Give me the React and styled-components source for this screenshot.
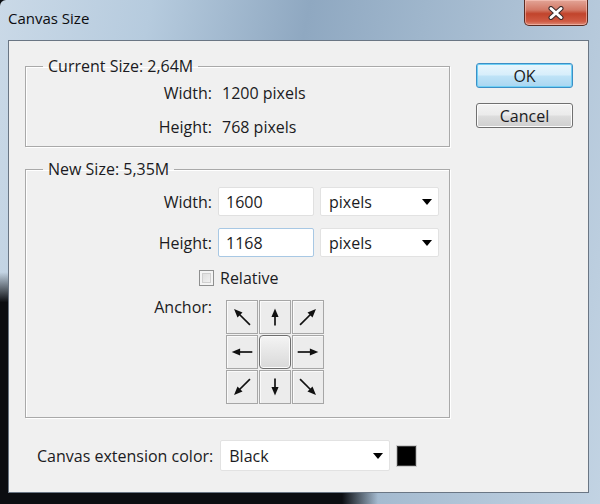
import React from "react";
import styled, { createGlobalStyle } from "styled-components";

const GlobalStyle = createGlobalStyle`
  html, body { margin: 0; padding: 0; background: #0b0d11; }
  body { font-family: "Open Sans", "Noto Sans", sans-serif; color: #1b1b22; }
  * { box-sizing: border-box; }
`;

function Arrow({ angle, len = 20 }) {
  const half = len / 2;
  return (
    <svg width="32" height="32" viewBox="0 0 32 32">
      <g transform={`rotate(${angle} 16 16)`}>
        <line x1="16" y1={16 + half} x2="16" y2={16 - half + 6} stroke="#111" strokeWidth="1.8" />
        <polygon points={`16,${16 - half} 12.2,${16 - half + 9} 19.8,${16 - half + 9}`} fill="#111" />
      </g>
    </svg>
  );
}

function Caret() {
  return (
    <svg width="10" height="6" viewBox="0 0 10 6">
      <polygon points="0,0 10,0 5,6" fill="#000" />
    </svg>
  );
}

function Dropdown({ value, wide }) {
  return (
    <Select wide={wide}>
      <span>{value}</span>
      <Caret />
    </Select>
  );
}

const anchors = [-45, 0, 45, -90, null, 90, -135, 180, 135];

export default function App() {
  return (
    <Window>
      <GlobalStyle />
      <TitleBar>
        <Title>Canvas Size</Title>
        <CloseButton>
          <svg width="18" height="14" viewBox="0 0 18 14">
            <path d="M4 2.5 L14 11.5 M14 2.5 L4 11.5" stroke="#3a2a2a" strokeWidth="5" strokeLinecap="round" />
            <path d="M4 2.5 L14 11.5 M14 2.5 L4 11.5" stroke="#fff" strokeWidth="3" strokeLinecap="round" />
          </svg>
        </CloseButton>
      </TitleBar>
      <Client>
        <TopArea>
          <LeftCol>
            <Group>
              <Legend>Current Size: 2,64M</Legend>
              <InfoGrid>
                <Label>Width:</Label>
                <Value>1200 pixels</Value>
                <Label>Height:</Label>
                <Value>768 pixels</Value>
              </InfoGrid>
            </Group>
            <Group second>
              <Legend>New Size: 5,35M</Legend>
              <NewBody>
                <FieldRow>
                  <RowLabel>Width:</RowLabel>
                  <Input>1600</Input>
                  <Dropdown value="pixels" />
                </FieldRow>
                <FieldRow gap={12}>
                  <RowLabel>Height:</RowLabel>
                  <Input focused>1168</Input>
                  <Dropdown value="pixels" />
                </FieldRow>
                <CheckRow>
                  <CheckBox />
                  <span>Relative</span>
                </CheckRow>
                <AnchorRow>
                  <RowLabel>Anchor:</RowLabel>
                  <AnchorGrid>
                    {anchors.map((a, i) =>
                      a === null ? (
                        <CenterCell key={i} />
                      ) : (
                        <Cell key={i}>
                          <Arrow angle={a} len={a % 90 === 0 ? (a === 0 || a === 180 ? 18 : 22) : 24} />
                        </Cell>
                      )
                    )}
                  </AnchorGrid>
                </AnchorRow>
              </NewBody>
            </Group>
          </LeftCol>
          <RightCol>
            <Button primary>OK</Button>
            <Button>Cancel</Button>
          </RightCol>
        </TopArea>
        <BottomRow>
          <span>Canvas extension color:</span>
          <Dropdown value="Black" wide />
          <Swatch />
        </BottomRow>
      </Client>
    </Window>
  );
}

const Window = styled.div`
  width: 600px;
  height: 504px;
  display: flex;
  flex-direction: column;
  overflow: hidden;
  border-top-left-radius: 6px;
  background:
    linear-gradient(to bottom, rgba(11, 13, 17, 0) 54%, #0b0d11 60%) left top / 9px 100% no-repeat,
    linear-gradient(to right, #0b0d11 57%, rgba(11, 13, 17, 0) 63%) left bottom / 100% 11px no-repeat,
    linear-gradient(100deg, #cad9e7 0%, #b6cbde 22%, #8fa8c1 45%, #9fb6cc 62%, #c2d3e3 100%);
`;

const TitleBar = styled.div`
  height: 40px;
  display: flex;
  justify-content: space-between;
  align-items: flex-start;
  padding-left: 8px;
`;

const Title = styled.div`
  font-size: 15px;
  line-height: 22px;
  margin-top: 7px;
  color: #0c0c10;
`;

const CloseButton = styled.div`
  width: 64px;
  height: 26px;
  margin-right: 12px;
  border: 1px solid #5b2b22;
  border-top: none;
  border-radius: 0 0 5px 5px;
  background: linear-gradient(to bottom, #e3a597 0%, #d27764 40%, #c1442c 55%, #cf5a43 85%, #dc8a76 100%);
  box-shadow: inset 0 0 0 1px rgba(255, 210, 200, 0.5);
  display: flex;
  align-items: center;
  justify-content: center;
`;

const Client = styled.div`
  flex: 1;
  margin: 0 11px 11px 8px;
  background: #f0f0f0;
  border: 1px solid #6a7684;
  padding: 15px 0 0 16px;
  display: flex;
  flex-direction: column;
  font-size: 16px;
  line-height: 20px;
`;

const TopArea = styled.div`
  display: flex;
  align-items: flex-start;
`;

const LeftCol = styled.div`
  width: 425px;
  display: flex;
  flex-direction: column;
`;

const Group = styled.fieldset`
  margin: ${(p) => (p.second ? "12px" : "0")} 0 0 0;
  padding: 0;
  min-inline-size: 0;
  border: 1px solid #a9a9a9;
  box-shadow: inset 1px 1px 0 #fff, 1px 1px 0 #fff;
`;

const Legend = styled.legend`
  margin-left: 17px;
  padding: 0 5px;
  font-size: 16px;
  line-height: 20px;
`;

const InfoGrid = styled.div`
  display: grid;
  grid-template-columns: 186px auto;
  column-gap: 10px;
  row-gap: 14px;
  padding: 7px 0 9px 0;
`;

const Label = styled.div`
  text-align: right;
`;

const Value = styled.div``;

const NewBody = styled.div`
  display: flex;
  flex-direction: column;
  padding: 8px 0 13px 0;
`;

const FieldRow = styled.div`
  display: flex;
  align-items: center;
  margin-top: ${(p) => p.gap || 0}px;
`;

const RowLabel = styled.div`
  width: 186px;
  text-align: right;
  flex-shrink: 0;
`;

const Input = styled.div`
  width: 96px;
  height: 29px;
  margin-left: 6px;
  background: #fff;
  border: 1px solid ${(p) => (p.focused ? "#a8c8e4" : "#e0e0e0")};
  border-radius: 2px;
  padding-left: 7px;
  display: flex;
  align-items: center;
`;

const Select = styled.div`
  width: ${(p) => (p.wide ? 170 : 119)}px;
  height: ${(p) => (p.wide ? 31 : 29)}px;
  margin-left: ${(p) => (p.wide ? 7 : 6)}px;
  background: #fff;
  border: 1px solid #e2e2e2;
  border-radius: 2px;
  padding: 0 6px 0 8px;
  display: flex;
  align-items: center;
  justify-content: space-between;
`;

const CheckRow = styled.div`
  display: flex;
  align-items: center;
  height: 20px;
  margin-top: 11px;
  padding-left: 173px;
  gap: 6px;
`;

const CheckBox = styled.div`
  width: 15px;
  height: 16px;
  border: 1px solid #8e8f8f;
  background: linear-gradient(135deg, #d8d8d8, #f7f7f7);
  box-shadow: inset 0 0 0 2px #f4f4f4, inset 0 0 0 3px #cfcfcf;
`;

const AnchorRow = styled.div`
  display: flex;
  align-items: flex-start;
  margin-top: 9px;
`;

const AnchorGrid = styled.div`
  display: grid;
  grid-template-columns: repeat(3, 32px);
  grid-template-rows: repeat(3, 34px);
  gap: 1px;
  margin: 3px 0 0 14px;
`;

const Cell = styled.div`
  border: 1px solid #a6a6a6;
  background: #ececec;
  box-shadow: inset 1px 1px 0 #fafafa;
  display: flex;
  align-items: center;
  justify-content: center;
`;

const CenterCell = styled.div`
  border: 1px solid #6f6f6f;
  border-radius: 4px;
  background: linear-gradient(to bottom, #f4f4f4, #d9d9d9);
  box-shadow: inset 0 0 0 1px #fbfbfb;
`;

const RightCol = styled.div`
  display: flex;
  flex-direction: column;
  gap: 15px;
  margin: 7px 0 0 26px;
`;

const Button = styled.div`
  width: 97px;
  height: 25px;
  border-radius: 3px;
  border: 1px solid ${(p) => (p.primary ? "#3c8fc6" : "#707070")};
  background: ${(p) =>
    p.primary
      ? "linear-gradient(to bottom, #e9f6fd 0%, #d7eefb 48%, #bfe3f7 52%, #a9d6f1 100%)"
      : "linear-gradient(to bottom, #f3f3f3 0%, #ebebeb 48%, #dddddd 52%, #cfcfcf 100%)"};
  box-shadow: inset 0 0 0 1px ${(p) => (p.primary ? "#6fd0f5" : "#fcfcfc")};
  display: flex;
  align-items: center;
  justify-content: center;
  font-size: 16px;
`;

const BottomRow = styled.div`
  display: flex;
  align-items: center;
  margin-top: 22px;
  padding-left: 12px;
`;

const Swatch = styled.div`
  width: 19px;
  height: 20px;
  margin-left: 7px;
  background: #000;
  border: 1px solid #3a3a3a;
  outline: 1px solid #cfcfcf;
`;
